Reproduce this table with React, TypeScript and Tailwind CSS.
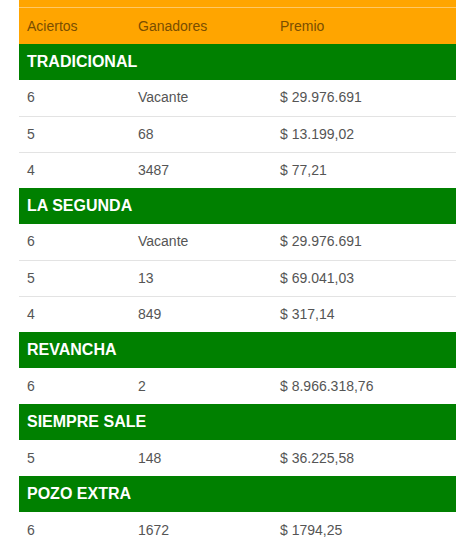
const sections = [
  {
    title: 'TRADICIONAL',
    rows: [
      ['6', 'Vacante', '$ 29.976.691'],
      ['5', '68', '$ 13.199,02'],
      ['4', '3487', '$ 77,21'],
    ],
  },
  {
    title: 'LA SEGUNDA',
    rows: [
      ['6', 'Vacante', '$ 29.976.691'],
      ['5', '13', '$ 69.041,03'],
      ['4', '849', '$ 317,14'],
    ],
  },
  { title: 'REVANCHA', rows: [['6', '2', '$ 8.966.318,76']] },
  { title: 'SIEMPRE SALE', rows: [['5', '148', '$ 36.225,58']] },
  { title: 'POZO EXTRA', rows: [['6', '1672', '$ 1794,25']] },
];

export default function App() {
  return (
    <div className="min-h-[550px] bg-white font-['Liberation_Sans',Arial,sans-serif] text-[14px]">
      <div className="mx-[19px] w-[437px]">
        <div className="h-[8px] border-b border-[#ffc866] bg-[#ffa500]" />
        <table className="w-full border-collapse">
          <thead>
            <tr className="h-[36px] bg-[#ffa500] text-[#7a4e00]">
              <th className="w-[111px] px-2 text-left font-normal">Aciertos</th>
              <th className="w-[142px] px-2 text-left font-normal">Ganadores</th>
              <th className="px-2 text-left font-normal">Premio</th>
            </tr>
          </thead>
          <tbody>
            {sections.map((section) => (
              <SectionRows key={section.title} title={section.title} rows={section.rows} />
            ))}
          </tbody>
        </table>
      </div>
    </div>
  );
}

function SectionRows({ title, rows }: { title: string; rows: string[][] }) {
  return (
    <>
      <tr className="h-[36px] bg-[#008000]">
        <td colSpan={3} className="px-2 text-[16px] font-bold text-white">
          {title}
        </td>
      </tr>
      {rows.map((row, i) => (
        <tr
          key={i}
          className={i === 0 ? 'h-[36px] text-[#555]' : 'h-[36px] border-t border-[#e3e3e3] text-[#555]'}
        >
          {row.map((cell, j) => (
            <td key={j} className="px-2">
              {cell}
            </td>
          ))}
        </tr>
      ))}
    </>
  );
}
